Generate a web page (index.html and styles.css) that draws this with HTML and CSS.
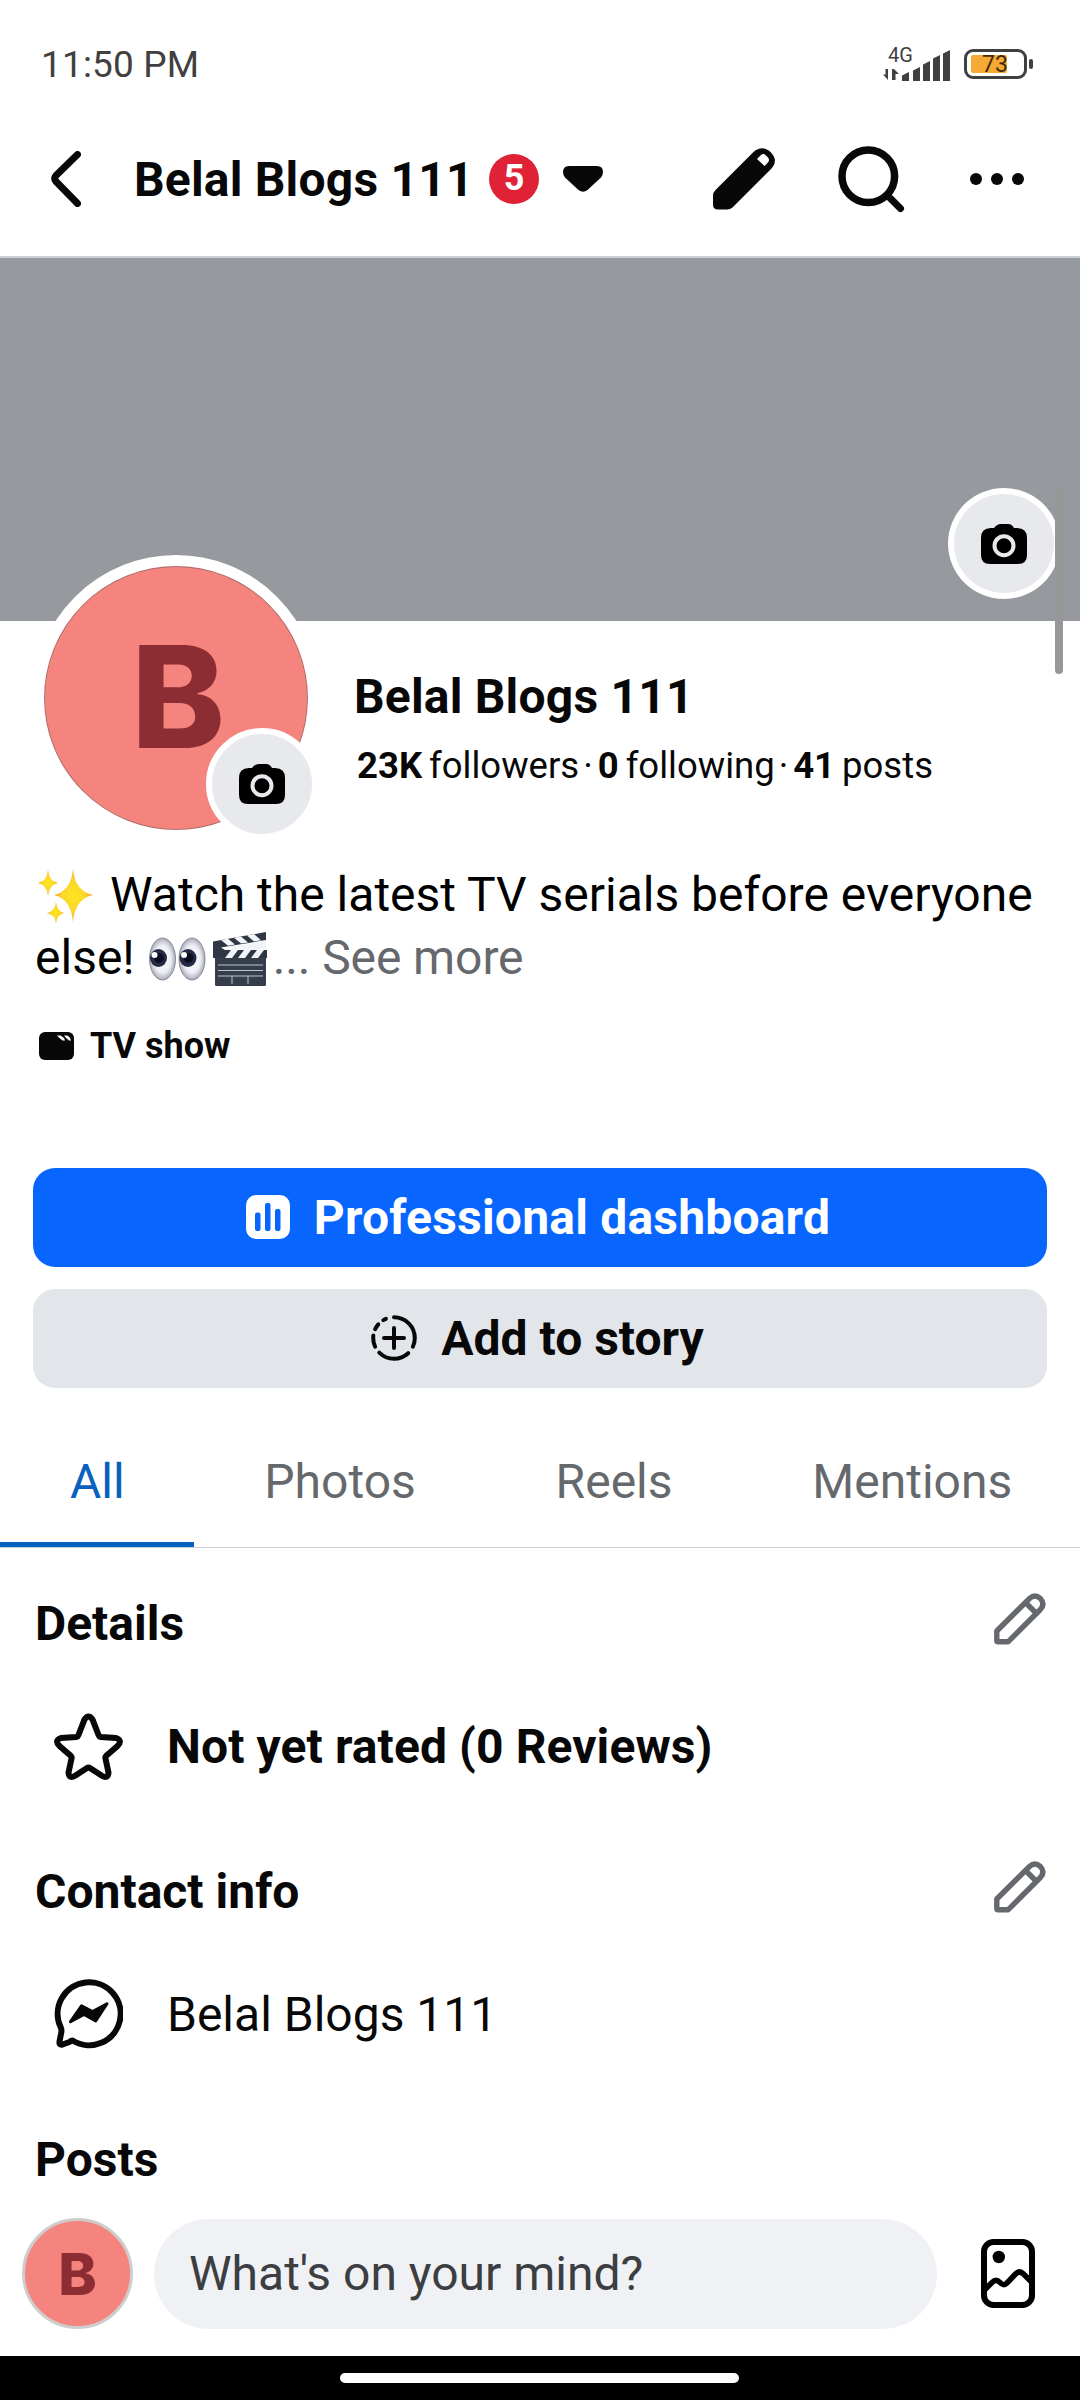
FILE: index.html
```html
<!DOCTYPE html>
<html lang="en">
<head>
<meta charset="utf-8">
<title>Belal Blogs 111</title>
<link rel="stylesheet" href="styles.css">
</head>
<body>
<svg class="defs" aria-hidden="true">
  <symbol id="camera" viewBox="0 0 46 40">
    <path d="M13 4 Q16 0 20 0 H27 Q31 0 33 4 H36 Q46 4 46 14 V31 Q46 40 37 40 H9 Q0 40 0 31 V14 Q0 4 10 4 Z"/>
    <circle cx="23" cy="21.7" r="9.5" fill="none" stroke="#e8e9ed" stroke-width="4"/>
  </symbol>
  <symbol id="pencil" viewBox="0 0 52 52">
    <path d="M2.8 38 L35.5 5.5 Q41 .6 46.4 5.5 Q51.4 11 46.4 16.5 L14 48.8 H4 Q2.8 48.8 2.8 47.6 Z M31.5 9.5 L42.5 20.5" fill="none" stroke="#65686c" stroke-width="5.4" stroke-linejoin="round"/>
  </symbol>
</svg>
<div class="screen">
  <div class="status">
    <span class="time">11:50 PM</span>
    <div class="network">
      <span class="gen">4G</span>
      <svg width="68" height="31" viewBox="0 0 68 31" fill="#404040">
        <path d="M5 19 V30 L0 24.5 H2.5 V19 Z M9 30 V19 H11 L16 24 H12.5 V30 Z"/>
        <path d="M19 31 V25.500 L26 22 V31 Z M30 31 V20.500 L37 17 V31 Z M40 31 V14.500 L47 11 V31 Z M50 31 V8.500 L57 5 V31 Z M60 31 V3.500 L67 0 V31 Z"/>
      </svg>
    </div>
    <div class="battery"><span class="level"></span><span class="pct">73</span></div>
    <span class="nub"></span>
  </div>

  <header class="topbar">
    <svg class="back" width="30" height="56" viewBox="0 0 30 56"><path d="M26.500 3.500 L5 24.500 Q2.500 27.500 5 30.500 L26.500 52.500" fill="none" stroke="#080809" stroke-width="7" stroke-linecap="round" stroke-linejoin="round"/></svg>
    <h1 class="title">Belal Blogs 111</h1>
    <span class="count">5</span>
    <svg class="caret" width="40" height="26" viewBox="0 0 40 26"><path d="M6 0 H34 Q40 0 40 6 Q40 9 38 11.500 L24.500 24 Q20 27.500 15.500 24 L2 11.500 Q0 9 0 6 Q0 0 6 0 Z" fill="#080809"/></svg>
    <svg class="edit" width="62" height="62" viewBox="0 0 62 62"><path fill-rule="evenodd" fill="#080809" d="M0 47.500 Q0 44.500 2.500 42 L40.500 4 Q49 -3.500 57.500 4 Q66 12.500 58 21 L19.500 59.500 Q17 61.500 14 61.500 H5 Q0 61.500 0 56.500 Z M44 11 L51.500 18 L55 14.500 Q57 12 55 9.500 L53 7.500 Q50.500 5 48 7 Z"/></svg>
    <svg class="search" width="68" height="68" viewBox="0 0 68 68"><g fill="none" stroke="#080809" stroke-linecap="round"><circle cx="30.300" cy="30.300" r="26.300" stroke-width="7.500"/><path d="M50 50 L62.500 62.500" stroke-width="7"/></g></svg>
    <svg width="54" height="12" viewBox="0 0 54 12" fill="#080809"><circle cx="6" cy="6" r="6"/><circle cx="27" cy="6" r="6"/><circle cx="48" cy="6" r="6"/></svg>
  </header>

  <div class="cover">
    <span class="cam"><svg width="46" height="40"><use href="#camera"/></svg></span>
    <span class="scrollbar"></span>
  </div>

  <section class="identity">
    <div class="avatar">B<span class="cam cam-avatar"><svg width="46" height="40"><use href="#camera"/></svg></span></div>
    <div class="who">
      <h2 class="name">Belal Blogs 111</h2>
      <p class="stats"><b>23K</b><span>followers</span><span class="dot">·</span><b>0</b><span>following</span><span class="dot">·</span><b>41</b><span>posts</span></p>
    </div>
  </section>

  <div class="bio">
    <p class="line"><svg class="sparkles" width="56" height="54" viewBox="0 0 56 54">
      <defs><radialGradient id="gold"><stop offset="0" stop-color="#ffe51f"/><stop offset=".6" stop-color="#fbd52c"/><stop offset="1" stop-color="#f0a02c"/></radialGradient></defs>
      <g fill="url(#gold)"><path d="M35 0 Q37 22 55 26 Q37 30 35 53 Q33 30 16 26 Q33 22 35 0 Z"/><path d="M10 1 Q11 12 20 14 Q11 16 10 27 Q9 16 0 14 Q9 12 10 1 Z"/><path d="M18 33 Q19 42 26 44 Q19 46 18 54 Q17 46 9 44 Q17 42 18 33 Z"/></g></svg><span>Watch the latest TV serials before everyone</span></p>
    <p class="line"><span>else!</span><svg class="eyes" width="57" height="44" viewBox="0 0 57 44">
      <defs><radialGradient id="ball"><stop offset="0" stop-color="#fff"/><stop offset=".65" stop-color="#edeef4"/><stop offset="1" stop-color="#a9abb8"/></radialGradient></defs>
      <g fill="url(#ball)" stroke="#777985" stroke-width=".8"><ellipse cx="13.500" cy="22" rx="13" ry="21"/><ellipse cx="43" cy="22" rx="13" ry="21"/></g>
      <g fill="#252943"><ellipse cx="9.500" cy="21" rx="8.500" ry="9"/><ellipse cx="39" cy="21" rx="8.500" ry="9"/></g>
      <g fill="#0b0d20"><circle cx="10" cy="21" r="4.800"/><circle cx="39.500" cy="21" r="4.800"/></g>
      <g fill="#fff"><circle cx="5.500" cy="18" r="3"/><circle cx="35" cy="18" r="3"/></g></svg><svg class="clapper" width="54" height="54" viewBox="0 0 54 54">
      <rect x="2" y="24" width="51" height="30" rx="1.500" fill="#353c4a"/>
      <path d="M0 9.500 L53 0 V8 L8 15.500 L12 18 H54 V26 H0 Z" fill="#303744"/>
      <path d="M8 8 L15 6.800 L22 12.500 L15 13.700 Z M21 5.700 L28 4.400 L35 10.500 L28 11.600 Z M34 3.400 L41 2.100 L48 8.200 L41 9.400 Z M12 26 L18 18 H25 L19 26 Z M25 26 L31 18 H38 L32 26 Z M38 26 L44 18 H51 L45 26 Z M12 16 L53 9.500 V17.500 H12 Z" fill="#f1f4f8"/>
      <path d="M5 33 H50 M5 38.500 H50 M5 44 H50 M19 44 V52 M35 44 V52" stroke="#bfc6cf" stroke-width="1" fill="none"/></svg><span class="more">... See more</span></p>
  </div>

  <div class="category"><svg width="35" height="28" viewBox="0 0 35 28"><rect width="35" height="28" rx="6" fill="#080809"/><path d="M18 3.500 H21.500 Q25 5 26 8.500 H23.500 Q20 6 18 3.500 Z M25 3.500 H28 Q31 4.500 32 8.500 H30 Q27 6.500 25 3.500 Z" fill="#fff"/></svg><span>TV show</span></div>

  <div class="actions">
    <div class="btn primary"><svg width="44" height="44" viewBox="0 0 44 44"><rect width="44" height="44" rx="10" fill="#fff"/><g fill="#0866ff"><rect x="9" y="17.500" width="5.500" height="18.500" rx="2"/><rect x="19" y="8" width="5.500" height="28" rx="2"/><rect x="29" y="14" width="5.500" height="22" rx="2"/></g></svg><span>Professional dashboard</span></div>
    <div class="btn secondary"><svg width="46" height="46" viewBox="0 0 46 46" fill="none" stroke="#080809" stroke-width="4" stroke-linecap="round"><circle cx="23" cy="23" r="20.800" pathLength="360" stroke-dasharray="115 22 88 20 32 18 16 18 8 23" transform="rotate(-90 23 23)"/><path d="M13 23 H33 M23 13 V33"/></svg><span>Add to story</span></div>
  </div>

  <nav class="tabs"><span class="tab active">All</span><span class="tab">Photos</span><span class="tab">Reels</span><span class="tab">Mentions</span></nav>

  <section class="block">
    <div class="head"><h3>Details</h3><svg width="52" height="52"><use href="#pencil"/></svg></div>
    <div class="row"><svg width="69" height="67" viewBox="0 0 69 67"><path d="M30.500 6.500 Q34.500 0.500 38.500 6.500 L44.500 22 Q45 23.500 47 24 L62 25 Q69 27.500 63.500 33 L52 43 Q51 44 51.500 45.500 L54.500 59.500 Q54 66.500 47.500 62.500 L36 55 Q34.500 54 33 55 L21.500 62.500 Q15 66.500 14.500 59.500 L17.500 45.500 Q18 44 17 43 L5.500 33 Q0 27.500 7 25 L22 24 Q24 23.500 24.500 22 Z" fill="none" stroke="#080809" stroke-width="6"/></svg><b class="rated">Not yet rated (0 Reviews)</b></div>
  </section>
  <section class="block">
    <div class="head"><h3>Contact info</h3><svg width="52" height="52"><use href="#pencil"/></svg></div>
    <div class="row"><svg width="69" height="70" viewBox="0 0 69 70"><path d="M18.500 61.500 A31.500 31.500 0 1 0 6.800 48.500 Q7.800 51 7.300 53.500 L5.500 62.500 Q4.800 66.300 8.500 65.500 L15.500 63 Q17 61.500 18.500 61.500 Z" fill="none" stroke="#080809" stroke-width="6" stroke-linejoin="round"/><path d="M16.500 42.700 L27.500 26.800 L38.500 32.500 L53 24.800 L41.700 42 L30 35.500 Z" fill="#080809" stroke="#080809" stroke-width="3" stroke-linejoin="round"/></svg><span>Belal Blogs 111</span></div>
  </section>
  <h3 class="posts">Posts</h3>

  <div class="composer">
    <div class="mini">B</div>
    <div class="prompt"><span>What's on your mind?</span></div>
    <svg width="54" height="69" viewBox="0 0 54 69"><rect x="3" y="3" width="48" height="63" rx="9.500" fill="none" stroke="#000" stroke-width="6"/><circle cx="17.800" cy="18" r="6.200"/><path d="M4 50.500 L11 43.500 Q15 39.500 19 43.500 Q22.500 47.500 26 44 L34.500 35 Q38.500 31 42.500 35 L50 42.500" fill="none" stroke="#000" stroke-width="5.500"/></svg>
  </div>
  <footer class="gesture"><span></span></footer>
</div>
</body>
</html>
```
FILE: styles.css
```css
* { box-sizing: border-box; }
body { margin: 0; background: #fff; font-family: Roboto, sans-serif; color: #080809; }
h1, h2, h3, p { margin: 0; font-size: inherit; font-weight: 700; }
svg { display: block; flex: none; }
.defs { position: absolute; width: 0; height: 0; }
.screen { width: 1080px; height: 2400px; overflow: hidden; display: flex; flex-direction: column; font-size: 48px; line-height: 56px; white-space: nowrap; }
.screen > * { flex: none; }

.status { height: 128px; display: flex; align-items: center; padding: 0 47px 0 41px; color: #404040; }
.time { font-size: 37px; letter-spacing: .15px; margin-right: auto; padding-top: 2px; }
.network { position: relative; width: 68px; height: 31px; margin: 2px 13px 0 0; }
.gen { position: absolute; left: 5px; top: -5px; font-size: 20px; line-height: 20px; }
.battery { position: relative; width: 63px; height: 30px; border: 3px solid #404040; border-radius: 9px; padding: 3px 4px; }
.level { display: block; width: 36px; height: 18px; border-radius: 2px; background: #f7a935; }
.pct { position: absolute; left: 15px; top: 1px; font-size: 23px; line-height: 24px; color: #40290c; }
.nub { width: 4px; height: 10px; margin-left: 2px; border-radius: 2px; background: #404040; }

.topbar { height: 130px; display: flex; align-items: center; padding: 0 56px 27px 51px; border-bottom: 2px solid #c9cfd2; }
.title { margin-left: 53px; width: 355px; padding-top: 2px; letter-spacing: .2px; }
.count { width: 50px; height: 50px; border-radius: 50%; background: #df2236; color: #fff; font-size: 36px; font-weight: 700; line-height: 49px; text-align: center; }
.caret { margin-left: 24px; }
.edit { margin-left: auto; }
.search { margin: 2px 64px 0 63px; }

.cover { position: relative; height: 363px; background: #96999e; }
.cam { position: absolute; display: flex; align-items: center; justify-content: center; width: 112px; height: 112px; border: 6px solid #fff; border-radius: 50%; background: #e8e9ed; }
.cover .cam { left: 948px; top: 230px; height: 111px; }
.scrollbar { position: absolute; left: 1055px; top: 230px; width: 8px; height: 186px; border-radius: 4px; background: #979797; }

.identity { display: flex; height: 243px; padding-left: 33px; }
.avatar { position: relative; width: 286px; height: 286px; margin-top: -66px; border: 11px solid #fff; border-radius: 50%; background: #f5837e; box-shadow: inset 0 0 0 1px #a3706f; color: #8b2d33; font: 800 141px/262px Inter, sans-serif; text-align: center; text-indent: 4px; }
.cam-avatar { left: 162px; top: 162px; text-indent: 0; }
.who { margin-left: 35px; padding-top: 48px; }
.name { letter-spacing: .2px; }
.stats { display: flex; margin-top: 17px; margin-left: 3px; font-size: 36.500px; line-height: 48px; font-weight: 400; }
.stats span { margin-left: 7px; }
.stats .dot { margin: 0 5.500px 0 4px; width: 9px; }

.bio { height: 126px; line-height: 63px; color: #000; }
.line { display: flex; height: 63px; align-items: center; padding-left: 35px; font-weight: 400; }
.line span { position: relative; top: -1px; }
.sparkles { margin: 1px 16px 0 3px; }
.eyes { margin-left: 14px; }
.clapper { margin-left: 7px; }
.more { margin-left: 6px; letter-spacing: -.1px; color: #65686c; }

.category { display: flex; align-items: center; height: 56px; margin-top: 28px; padding-left: 39px; gap: 16px; font-size: 36px; font-weight: 700; }

.actions { padding: 94px 33px 0; display: grid; gap: 22px; }
.btn { height: 99px; display: flex; align-items: center; justify-content: center; border-radius: 22px; font-weight: 700; gap: 24px; }
.btn svg { margin-bottom: 1px; }
.primary { background: #0866ff; color: #fff; padding-right: 4px; letter-spacing: .2px; }
.secondary { background: #e2e5e9; padding-right: 5px; }

.tabs { display: flex; height: 160px; padding-top: 14px; border-bottom: 1px solid #ccd0d5; color: #65686c; line-height: 160px; }
.tab { height: 145px; line-height: 160px; padding: 0 69.900px; }
.active { color: #0861bf; border-bottom: 5px solid #0861bf; }

.block { height: 268px; padding: 45px 34px 0 35px; }
.head { display: flex; justify-content: space-between; align-items: center; height: 52px; }
.head h3 { padding-top: 10px; }
.row { display: flex; align-items: center; margin-top: 66px; padding-left: 18.500px; gap: 44.500px; height: 70px; }
.row b, .row span { padding-top: 2px; letter-spacing: .1px; }
.row span { letter-spacing: 0; }
.posts { margin-left: 35px; margin-top: 48px; height: 56px; }

.composer { display: flex; align-items: center; margin-top: 30px; padding: 0 45px 0 22px; height: 111px; }
.mini { width: 111px; height: 111px; border: 3px solid #cfcccc; border-radius: 50%; background: #f5837e; color: #8b2d33; font: 800 58px/106px Inter, sans-serif; text-align: center; }
.prompt { width: 783px; height: 110px; margin-left: 21px; margin-right: 44px; padding-left: 35px; border-radius: 55px; background: #f0f1f5; color: #3c3e41; line-height: 110px; }
.gesture { margin-top: auto; height: 44px; background: #000; display: flex; justify-content: center; padding: 17px 1px 0 0; }
.gesture span { width: 399px; height: 10px; border-radius: 5px; background: #fff; }
```
